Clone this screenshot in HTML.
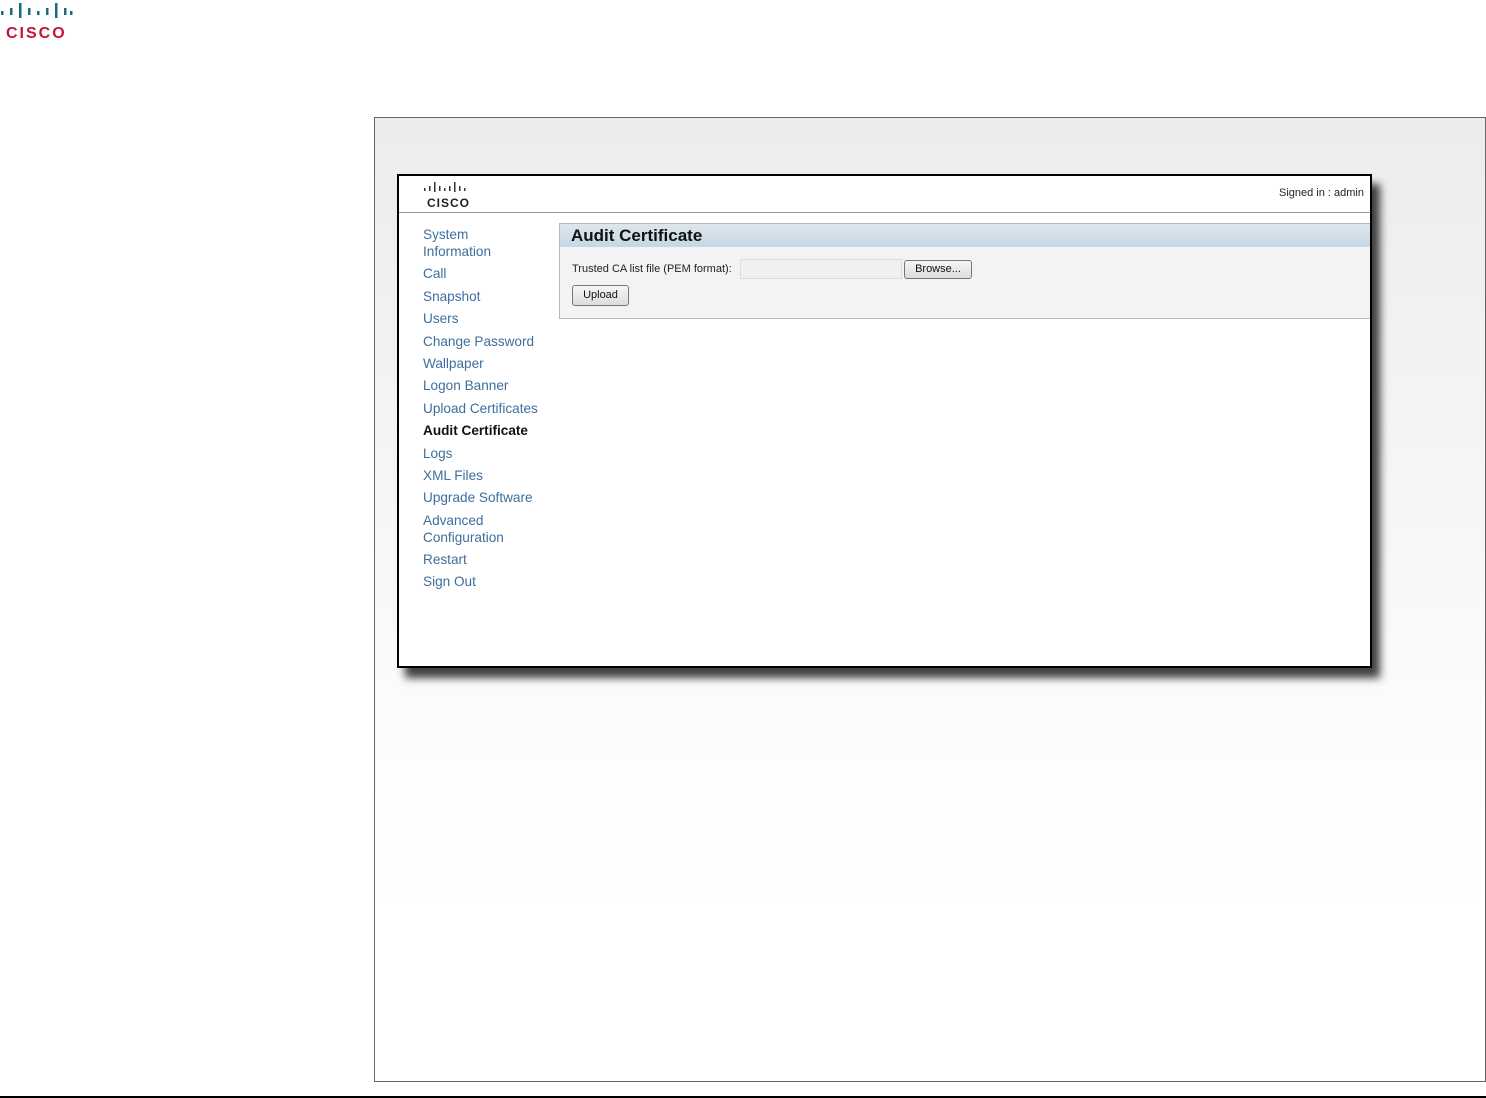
<!DOCTYPE html>
<html><head><style>
body{margin:0;width:1486px;height:1098px;background:#fff;position:relative;overflow:hidden;font-family:"Liberation Sans",Arial,sans-serif}
.frame{position:absolute;left:374px;top:117px;width:1110px;height:963px;border:1px solid #666;background:linear-gradient(#ececec 0px,#f4f4f4 300px,#fdfdfd 650px,#fff 800px)}
.bline{position:absolute;left:0;top:1096px;width:1486px;height:2px;background:#000}
.win{position:absolute;left:397px;top:174px;width:971px;height:490px;border:2px solid #000;background:#fff;box-shadow:8px 10px 8px rgba(0,0,0,.75);overflow:hidden}
.hdr{position:absolute;left:0;top:0;width:971px;height:36px;border-bottom:1px solid #999}
.signed{position:absolute;right:6px;top:11px;font-size:11px;color:#222}
.menu{position:absolute;left:24px;top:50px;font-size:13.6px;color:#3d6f9e;line-height:17px}
.menu div{margin-bottom:5.4px}
.menu .act{color:#111;font-weight:bold}
.panel{position:absolute;left:160px;top:47px;width:811px;height:94px;border:1px solid #a9bcc6;border-right:none;background:#f3f3f3}
.title{height:23px;background:linear-gradient(#dde7ee,#c5d7e2);font-weight:bold;font-size:17px;color:#111;padding-left:11px;line-height:24px}
.row{position:absolute;left:12px;top:39px;font-size:11px;color:#222}
.inp{position:absolute;left:180px;top:35px;width:160px;height:18px;border:1px solid #ddd;background:#f0f0f0}
.btn{position:absolute;border:1px solid #777;border-radius:3px;background:linear-gradient(#f6f6f6,#dcdcdc);font-size:11px;text-align:center;line-height:17px;color:#111}
</style></head><body>
<svg style="position:absolute;left:0;top:0" width="80" height="42">
<g fill="#1d6a80">
<rect x="1" y="11" width="2.5" height="4"/><rect x="10" y="8" width="2.5" height="7"/><rect x="19" y="3" width="2.5" height="15"/><rect x="28" y="8" width="2.5" height="7"/><rect x="37" y="11" width="2.5" height="4"/><rect x="46" y="8" width="2.5" height="7"/><rect x="55" y="3" width="2.5" height="15"/><rect x="64" y="8" width="2.5" height="7"/><rect x="70" y="11" width="2.5" height="4"/>
</g>
<text x="6" y="38" font-family="Liberation Sans" font-weight="bold" font-size="16" fill="#c4153a" letter-spacing="2">CISCO</text>
</svg>
<div class="frame"></div>
<div class="bline"></div>
<div class="win">
 <div class="hdr">
  <svg style="position:absolute;left:24px;top:5px" width="52" height="28"><g fill="#333"><rect x="1" y="7" width="1.5" height="3"/><rect x="6" y="5" width="1.5" height="5"/><rect x="11" y="1" width="1.5" height="10"/><rect x="16" y="5" width="1.5" height="5"/><rect x="21" y="7" width="1.5" height="3"/><rect x="26" y="5" width="1.5" height="5"/><rect x="31" y="1" width="1.5" height="10"/><rect x="36" y="5" width="1.5" height="5"/><rect x="41" y="7" width="1.5" height="3"/></g>
  <text x="4" y="26" font-family="Liberation Sans" font-weight="bold" font-size="12" fill="#222" letter-spacing="1">CISCO</text></svg>
  <div class="signed">Signed in : admin</div>
 </div>
 <div class="menu">
  <div>System<br>Information</div><div>Call</div><div>Snapshot</div><div>Users</div><div>Change Password</div><div>Wallpaper</div><div>Logon Banner</div><div>Upload Certificates</div><div class="act">Audit Certificate</div><div>Logs</div><div>XML Files</div><div>Upgrade Software</div><div>Advanced<br>Configuration</div><div>Restart</div><div>Sign Out</div>
 </div>
 <div class="panel">
  <div class="title">Audit Certificate</div>
  <div class="row">Trusted CA list file (PEM format):</div>
  <div class="inp"></div>
  <div class="btn" style="left:344px;top:36px;width:66px;height:17px">Browse...</div>
  <div class="btn" style="left:12px;top:61px;width:55px;height:19px;line-height:19px">Upload</div>
 </div>
</div>
</body></html>
